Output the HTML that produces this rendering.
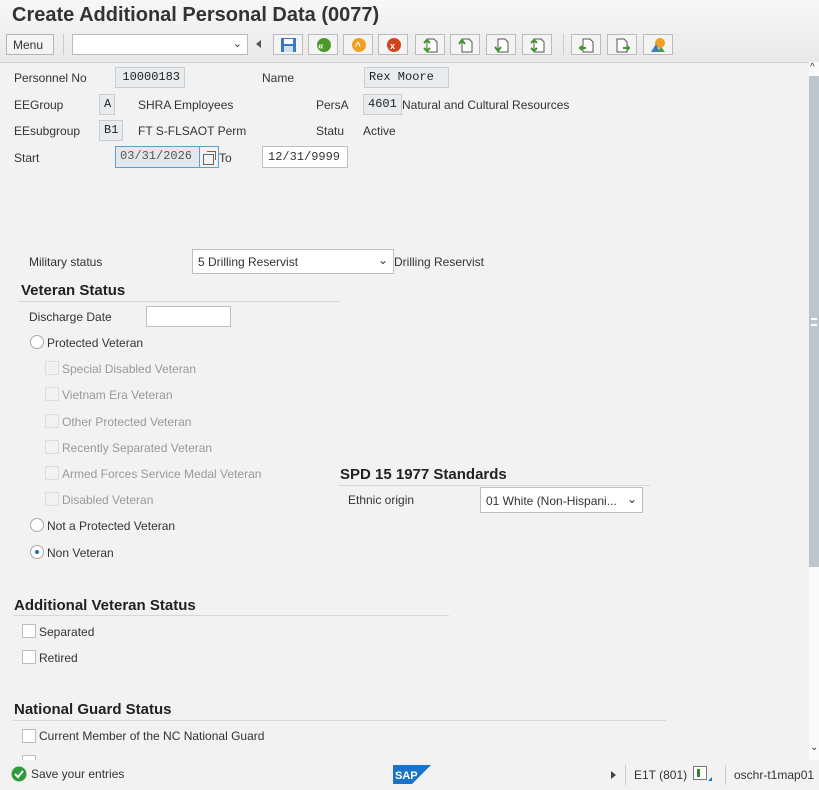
<!DOCTYPE html>
<html><head><style>
body{margin:0;width:819px;height:790px;background:#f2f2f2;font-family:"Liberation Sans",sans-serif;font-size:12px;color:#333;position:relative;overflow:hidden}
.a{position:absolute;white-space:nowrap}
.box{position:absolute;background:#e8ecef;border:1px solid #c9ced2;font-family:"Liberation Mono",monospace;font-size:12px;color:#222;box-sizing:border-box;padding:3px 4px;line-height:13px}
.in{position:absolute;background:#fff;border:1px solid #bfbfbf;box-sizing:border-box;font-size:12px;padding:3px 5px;line-height:14px}
.h{position:absolute;font-weight:bold;font-size:15px;color:#222;white-space:nowrap}
.ln{position:absolute;height:1px;background:#d7d7d7}
.cb{position:absolute;width:12px;height:12px;border:1px solid #bdbdbd;background:#fff}
.cb.d{border-color:#ddd;background:#f2f2f2}
.rd{position:absolute;width:12px;height:12px;border:1px solid #aaa;border-radius:50%;background:#fff}
.g{color:#999}
.tb{position:absolute;top:34px;width:30px;height:21px;border:1px solid #bcbcbc;background:#f4f4f4;box-sizing:border-box}
.tb svg{position:absolute;left:6px;top:2px}
</style></head><body>
<div class="a" style="left:0;top:0;width:819px;height:62px;background:linear-gradient(#f7f7f7,#e8e8e8);border-bottom:1px solid #d0d0d0"></div>
<div class="a" style="left:12px;top:4px;font-size:20px;font-weight:bold;color:#333">Create Additional Personal Data (0077)</div>
<div class="a" style="left:6px;top:34px;width:48px;height:21px;border:1px solid #b5b5b5;background:#f4f4f4;box-sizing:border-box;font-size:12px;padding:3px 6px">Menu</div>
<div class="a" style="left:63px;top:34px;width:1px;height:21px;background:#ccc"></div>
<div class="a" style="left:72px;top:34px;width:176px;height:21px;border:1px solid #bbb;background:#fff;box-sizing:border-box"><span style="position:absolute;right:5px;top:2px;font-size:11px">&#8964;</span></div>
<div class="a" style="left:256px;top:40px;width:0;height:0;border-top:4px solid transparent;border-bottom:4px solid transparent;border-right:5px solid #555"></div>
<div class="tb" style="left:273px"><svg width="17" height="16"><rect x="1" y="1" width="15" height="14" fill="#3a7bbf"/><rect x="4" y="2" width="9" height="5" fill="#fff"/><rect x="4" y="9" width="9" height="6" fill="#cfe0f0"/></svg></div>
<div class="tb" style="left:308px"><svg width="17" height="16"><circle cx="9" cy="8" r="7" fill="#4c9a2a"/><text x="3" y="12" font-size="10" fill="#fff" font-weight="bold">«</text></svg></div>
<div class="tb" style="left:343px"><svg width="17" height="16"><circle cx="9" cy="8" r="7" fill="#f0a020"/><text x="5" y="12" font-size="10" fill="#fff" font-weight="bold">^</text></svg></div>
<div class="tb" style="left:378px"><svg width="17" height="16"><circle cx="9" cy="8" r="7" fill="#d0451b"/><text x="5" y="12" font-size="9" fill="#fff" font-weight="bold">x</text></svg></div>
<div class="tb" style="left:415px"><svg width="17" height="16"><path d="M5 2h7l3 3v10H5z" fill="#fff" stroke="#555"/><path d="M2 6l3-3 3 3M2 11l3 3 3-3" stroke="#3a9a2a" stroke-width="2" fill="none"/></svg></div>
<div class="tb" style="left:450px"><svg width="17" height="16"><path d="M5 2h7l3 3v10H5z" fill="#fff" stroke="#555"/><path d="M2 7l3-4 3 4" stroke="#3a9a2a" stroke-width="2" fill="none"/></svg></div>
<div class="tb" style="left:486px"><svg width="17" height="16"><path d="M5 2h7l3 3v10H5z" fill="#fff" stroke="#555"/><path d="M2 10l3 4 3-4" stroke="#3a9a2a" stroke-width="2" fill="none"/></svg></div>
<div class="tb" style="left:522px"><svg width="17" height="16"><path d="M5 2h7l3 3v10H5z" fill="#fff" stroke="#555"/><path d="M2 6l3-3 3 3M2 11l3 3 3-3" stroke="#3a9a2a" stroke-width="2" fill="none"/></svg></div>
<div class="a" style="left:563px;top:34px;width:1px;height:21px;background:#ccc"></div>
<div class="tb" style="left:571px"><svg width="17" height="16"><path d="M5 2h7l3 3v10H5z" fill="#fff" stroke="#555"/><path d="M8 11H2M4 9l-2 2 2 2" stroke="#3a9a2a" stroke-width="2" fill="none"/></svg></div>
<div class="tb" style="left:607px"><svg width="17" height="16"><path d="M3 2h7l3 3v10H3z" fill="#fff" stroke="#555"/><path d="M9 11h6M13 9l2 2-2 2" stroke="#3a9a2a" stroke-width="2" fill="none"/></svg></div>
<div class="tb" style="left:643px"><svg width="17" height="16"><circle cx="10" cy="6" r="5" fill="#f0a020"/><path d="M1 15l5-8 4 8z" fill="#3b7cc4"/><path d="M7 15l4-5 4 5z" fill="#4ca03a"/></svg></div>

<div class="a" style="left:809px;top:62px;width:10px;height:698px;background:#fafafa"></div>
<div class="a" style="left:810px;top:62px;font-size:10px">&#94;</div>
<div class="a" style="left:809px;top:76px;width:10px;height:491px;background:#bcc6cc"></div>
<div class="a" style="left:811px;top:318px;width:6px;height:8px;border-top:2px solid #fff;border-bottom:2px solid #fff;box-sizing:border-box"></div>
<div class="a" style="left:810px;top:742px;font-size:10px">&#8964;</div>

<div class="a" style="left:14px;top:71px">Personnel No</div>
<div class="box" style="left:115px;top:67px;width:70px;height:21px;text-align:right">10000183</div>
<div class="a" style="left:262px;top:71px">Name</div>
<div class="box" style="left:364px;top:67px;width:85px;height:21px">Rex Moore</div>
<div class="a" style="left:14px;top:98px">EEGroup</div>
<div class="box" style="left:99px;top:94px;width:16px;height:21px">A</div>
<div class="a" style="left:138px;top:98px">SHRA Employees</div>
<div class="a" style="left:316px;top:98px">PersA</div>
<div class="box" style="left:363px;top:94px;width:39px;height:21px">4601</div>
<div class="a" style="left:402px;top:98px">Natural and Cultural Resources</div>
<div class="a" style="left:14px;top:124px">EEsubgroup</div>
<div class="box" style="left:99px;top:120px;width:24px;height:21px">B1</div>
<div class="a" style="left:138px;top:124px">FT S-FLSAOT Perm</div>
<div class="a" style="left:316px;top:124px">Statu</div>
<div class="a" style="left:363px;top:124px">Active</div>
<div class="a" style="left:14px;top:151px">Start</div>
<div class="box" style="left:115px;top:146px;width:85px;height:22px;border-color:#5aa0d0;background:#e3e8ec;color:#555">03/31/2026</div>
<div class="a" style="left:199px;top:146px;width:20px;height:22px;border:1px solid #5aa0d0;box-sizing:border-box"><div style="position:absolute;left:3px;top:7px;width:9px;height:9px;border:1px solid #666"></div><div style="position:absolute;left:7px;top:4px;width:8px;height:8px;border-top:1px solid #666;border-right:1px solid #666"></div></div>
<div class="a" style="left:219px;top:151px">To</div>
<div class="in" style="left:262px;top:146px;width:86px;height:22px;font-family:'Liberation Mono',monospace">12/31/9999</div>

<div class="a" style="left:29px;top:255px">Military status</div>
<div class="in" style="left:192px;top:249px;width:202px;height:25px;padding:5px 5px">5 Drilling Reservist<span style="position:absolute;right:5px;top:3px">&#8964;</span></div>
<div class="a" style="left:394px;top:255px">Drilling Reservist</div>
<div class="h" style="left:21px;top:282px">Veteran Status</div>
<div class="ln" style="left:18px;top:301px;width:322px"></div>
<div class="a" style="left:29px;top:310px">Discharge Date</div>
<div class="in" style="left:146px;top:306px;width:85px;height:21px"></div>
<div class="rd" style="left:30px;top:335px"></div><div class="a" style="left:47px;top:336px">Protected Veteran</div>
<div class="cb d" style="left:45px;top:361px"></div><div class="a g" style="left:62px;top:362px">Special Disabled Veteran</div>
<div class="cb d" style="left:45px;top:387px"></div><div class="a g" style="left:62px;top:388px">Vietnam Era Veteran</div>
<div class="cb d" style="left:45px;top:414px"></div><div class="a g" style="left:62px;top:415px">Other Protected Veteran</div>
<div class="cb d" style="left:45px;top:440px"></div><div class="a g" style="left:62px;top:441px">Recently Separated Veteran</div>
<div class="cb d" style="left:45px;top:466px"></div><div class="a g" style="left:62px;top:467px">Armed Forces Service Medal Veteran</div>
<div class="cb d" style="left:45px;top:492px"></div><div class="a g" style="left:62px;top:493px">Disabled Veteran</div>
<div class="rd" style="left:30px;top:518px"></div><div class="a" style="left:47px;top:519px">Not a Protected Veteran</div>
<div class="rd" style="left:30px;top:545px"><div style="position:absolute;left:4px;top:4px;width:4px;height:4px;border-radius:50%;background:#1a6fb5"></div></div><div class="a" style="left:47px;top:546px">Non Veteran</div>

<div class="h" style="left:340px;top:466px">SPD 15 1977 Standards</div>
<div class="ln" style="left:338px;top:485px;width:312px"></div>
<div class="a" style="left:348px;top:493px">Ethnic origin</div>
<div class="in" style="left:480px;top:487px;width:163px;height:26px;padding:6px 5px">01 White (Non-Hispani...<span style="position:absolute;right:5px;top:4px">&#8964;</span></div>

<div class="h" style="left:14px;top:597px">Additional Veteran Status</div>
<div class="ln" style="left:13px;top:615px;width:436px"></div>
<div class="cb" style="left:22px;top:624px"></div><div class="a" style="left:39px;top:625px">Separated</div>
<div class="cb" style="left:22px;top:650px"></div><div class="a" style="left:39px;top:651px">Retired</div>

<div class="h" style="left:14px;top:701px">National Guard Status</div>
<div class="ln" style="left:13px;top:720px;width:653px"></div>
<div class="cb" style="left:22px;top:729px"></div><div class="a" style="left:39px;top:729px">Current Member of the NC National Guard</div>
<div class="cb" style="left:22px;top:755px"></div>

<div class="a" style="left:0;top:760px;width:819px;height:30px;background:#f2f2f2"></div>
<svg class="a" style="left:11px;top:766px" width="16" height="16"><circle cx="8" cy="8" r="7.5" fill="#2f9a3a"/><path d="M4 8l3 3 5-6" stroke="#fff" stroke-width="2" fill="none"/></svg>
<div class="a" style="left:31px;top:767px">Save your entries</div>
<svg class="a" style="left:393px;top:765px" width="38" height="19"><path d="M0 0h38L19 19H0z" fill="#1b74c9"/><text x="2" y="14" font-size="11" font-weight="bold" fill="#fff" font-family="Liberation Sans">SAP</text></svg>
<div class="a" style="left:611px;top:771px;width:0;height:0;border-top:4px solid transparent;border-bottom:4px solid transparent;border-left:5px solid #444"></div>
<div class="a" style="left:625px;top:765px;width:1px;height:20px;background:#ccc"></div>
<div class="a" style="left:634px;top:768px">E1T (801)</div>
<div class="a" style="left:693px;top:766px;width:14px;height:14px;border:1px solid #777;background:#fff;box-sizing:border-box"><div style="position:absolute;left:3px;top:2px;width:3px;height:8px;background:#2a8a2a"></div></div>
<div class="a" style="left:708px;top:777px;width:0;height:0;border-left:4px solid transparent;border-bottom:4px solid #1b74c9"></div>
<div class="a" style="left:725px;top:765px;width:1px;height:20px;background:#ccc"></div>
<div class="a" style="left:734px;top:768px">oschr-t1map01</div>
</body></html>
